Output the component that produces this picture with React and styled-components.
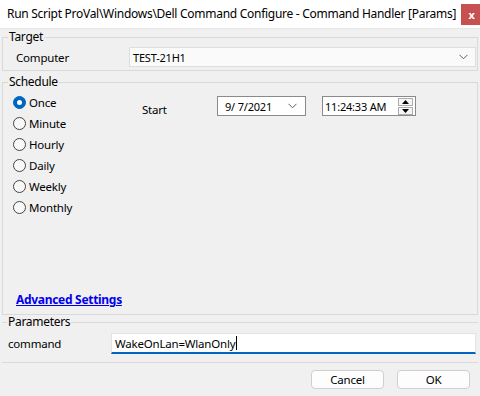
import React from "react";
import styled, { createGlobalStyle } from "styled-components";

const Global = createGlobalStyle`
  html, body { margin: 0; padding: 0; background: #f0f0f0; }
  body { font-family: "Noto Sans", "Segoe UI", sans-serif; font-size: 11px; letter-spacing: -0.2px; color: #000; }
  * { box-sizing: border-box; }
`;

const Window = styled.div`
  width: 480px;
  height: 396px;
  background: #f0f0f0;
  display: flex;
  flex-direction: column;
  overflow: hidden;
`;

const TitleBar = styled.div`
  height: 29px;
  background: #fff;
  border-bottom: 1px solid #e6e6e6;
  display: flex;
  align-items: flex-start;
  justify-content: space-between;
  padding-left: 7px;
`;

const Title = styled.div`
  margin-top: 6px;
  font-size: 12px;
  line-height: 16px;
  white-space: nowrap;
  letter-spacing: -0.28px;
`;

const CloseButton = styled.div`
  margin-top: 4px;
  width: 19px;
  height: 21px;
  background: #c75050;
  color: #fff;
  font-size: 11px;
  font-weight: bold;
  display: flex;
  align-items: center;
  justify-content: center;
  padding-left: 2px;
`;

const Group = styled.fieldset`
  margin: ${(p) => p.$mt || 0}px 2px 0 2px;
  padding: 0;
  min-width: 0;
  border: 1px solid #d9d9d9;
  ${(p) => p.$noSides && "border-left: none; border-right: none;"}
`;

const Legend = styled.legend`
  margin-left: 5px;
  padding: 0 1px;
  font-size: 12px;
  letter-spacing: -0.3px;
  line-height: ${(p) => p.$lh || 16}px;
`;

const Row = styled.div`
  display: flex;
  align-items: center;
  padding: ${(p) => p.$pad};
`;

const FieldLabel = styled.div`
  width: ${(p) => p.$w}px;
  flex: none;
  font-size: 11.5px;
`;

const ComboBox = styled.div`
  flex: 1;
  height: 20px;
  background: #fafafa;
  border: 1px solid #dedede;
  display: flex;
  align-items: center;
  justify-content: space-between;
  padding: 0 7px 0 3px;
`;

const Chevron = () => (
  <svg width="9" height="6" viewBox="0 0 9 6">
    <path d="M0.5 0.8 L4.5 4.8 L8.5 0.8" fill="none" stroke="#606060" strokeWidth="1" />
  </svg>
);

const ScheduleBody = styled.div`
  display: flex;
  padding: 2px 0 0 10px;
`;

const RadioColumn = styled.div`
  width: 129px;
  display: flex;
  flex-direction: column;
`;

const RadioRow = styled.div`
  height: 21px;
  display: flex;
  align-items: center;
  gap: 3px;
  font-size: 11.5px;
`;

const RadioCircle = styled.span`
  width: 13px;
  height: 13px;
  border-radius: 50%;
  flex: none;
  border: 1px solid ${(p) => (p.$on ? "#0067c0" : "#444")};
  background: ${(p) => (p.$on ? "#0067c0" : "#f8f8f8")};
  display: flex;
  align-items: center;
  justify-content: center;
  &::after {
    content: "";
    width: 5px;
    height: 5px;
    border-radius: 50%;
    background: #fff;
    display: ${(p) => (p.$on ? "block" : "none")};
  }
`;

const StartRow = styled.div`
  display: flex;
  align-items: center;
  margin-top: 4px;
  height: 20px;
`;

const StartLabel = styled.div`
  width: 75px;
  font-size: 11.5px;
  padding-top: 7px;
`;

const Picker = styled.div`
  width: ${(p) => p.$w}px;
  height: 20px;
  background: #fff;
  border: 1px solid #8a8a8a;
  display: flex;
  align-items: center;
  justify-content: space-between;
  padding: ${(p) => p.$pad};
  margin-left: ${(p) => p.$ml || 0}px;
`;

const Spin = styled.div`
  display: flex;
  flex-direction: column;
  gap: 1px;
`;

const SpinBtn = styled.div`
  width: 15px;
  height: 8px;
  border: 1px solid #adadad;
  background: #f5f5f5;
  display: flex;
  align-items: center;
  justify-content: center;
`;

const Tri = ({ up }) => (
  <svg width="7" height="4" viewBox="0 0 7 4">
    <path d={up ? "M0 4 L3.5 0 L7 4 Z" : "M0 0 L3.5 4 L7 0 Z"} fill="#000" />
  </svg>
);

const AdvancedLink = styled.a`
  display: block;
  margin: 74px 0 6px 13px;
  font-size: 12px;
  letter-spacing: -0.3px;
  line-height: 16px;
  font-weight: bold;
  color: #0000ee;
  text-decoration: underline;
  width: max-content;
  cursor: pointer;
`;

const TextInput = styled.div`
  flex: 1;
  height: 21px;
  background: #fff;
  border: 1px solid #e3e3e3;
  border-bottom: 2px solid #0067c0;
  display: flex;
  align-items: center;
  padding: 0 3px;
  font-size: 11.5px;
  margin-right: 2px;
`;

const Caret = styled.span`
  display: inline-block;
  width: 1px;
  height: 14px;
  background: #000;
  margin-left: 1px;
`;

const Footer = styled.div`
  display: flex;
  justify-content: flex-end;
  gap: 13px;
  padding: 7px 10px 0 0;
`;

const Button = styled.button`
  width: 73px;
  height: 19px;
  background: #fdfdfd;
  border: 1px solid #cfcfcf;
  border-radius: 4px;
  font-family: inherit;
  font-size: 11.5px;
  letter-spacing: -0.2px;
  padding: 0;
  color: #000;
`;

const options = ["Once", "Minute", "Hourly", "Daily", "Weekly", "Monthly"];

export default function App() {
  return (
    <Window>
      <Global />
      <TitleBar>
        <Title>Run Script ProVal\Windows\Dell Command Configure - Command Handler [Params]</Title>
        <CloseButton>x</CloseButton>
      </TitleBar>

      <Group>
        <Legend>Target</Legend>
        <Row $pad="2px 1px 3px 13px">
          <FieldLabel $w={113}>Computer</FieldLabel>
          <ComboBox>
            <span>TEST-21H1</span>
            <Chevron />
          </ComboBox>
        </Row>
      </Group>

      <Group $mt={3}>
        <Legend>Schedule</Legend>
        <ScheduleBody>
          <RadioColumn>
            {options.map((o, i) => (
              <RadioRow key={o}>
                <RadioCircle $on={i === 0} />
                {o}
              </RadioRow>
            ))}
          </RadioColumn>
          <StartRow>
            <StartLabel>Start</StartLabel>
            <Picker $w={89} $pad="0 8px 0 7px">
              <span>9/ 7/2021</span>
              <Chevron />
            </Picker>
            <Picker $w={94} $ml={16} $pad="0 2px 0 2px">
              <span>11:24:33 AM</span>
              <Spin>
                <SpinBtn><Tri up /></SpinBtn>
                <SpinBtn><Tri /></SpinBtn>
              </Spin>
            </Picker>
          </StartRow>
        </ScheduleBody>
        <AdvancedLink>Advanced Settings</AdvancedLink>
      </Group>

      <Group $noSides>
        <Legend $lh={14}>Parameters</Legend>
        <Row $pad="4px 0 8px 6px">
          <FieldLabel $w={103}>command</FieldLabel>
          <TextInput>
            WakeOnLan=WlanOnly<Caret />
          </TextInput>
        </Row>
      </Group>

      <Footer>
        <Button>Cancel</Button>
        <Button>OK</Button>
      </Footer>
    </Window>
  );
}
